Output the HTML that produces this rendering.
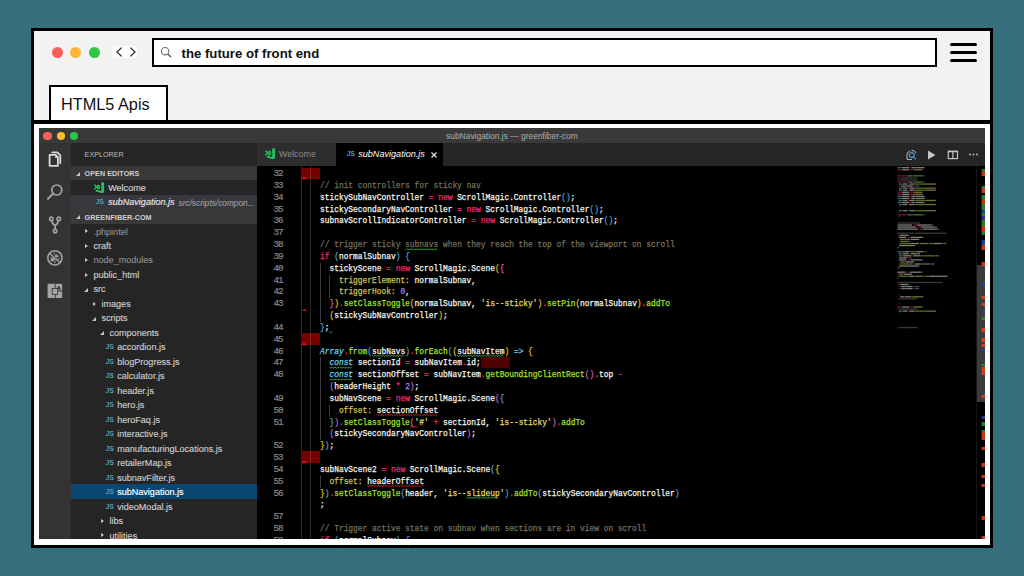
<!DOCTYPE html>
<html><head><meta charset="utf-8">
<style>
*{box-sizing:border-box;margin:0;padding:0}
html,body{width:1024px;height:576px;overflow:hidden;background:#376e7b;font-family:"Liberation Sans",sans-serif}
.a{position:absolute}
#frame{position:absolute;left:30.6px;top:28px;width:962.5px;height:520px;border:3px solid #000;background:#f2f2f2}
.dot{position:absolute;border-radius:50%}
#search{position:absolute;left:151.6px;top:37.9px;width:785.4px;height:28.8px;border:2.4px solid #000;background:#fff}
#stext{position:absolute;left:181.5px;top:45.8px;font-weight:bold;font-size:13.2px;color:#111;white-space:nowrap}
.hb{position:absolute;left:950px;width:27px;height:3px;background:#000;border-radius:1.5px}
#tab{position:absolute;left:49px;top:84.6px;width:119px;height:37px;border:2px solid #000;border-bottom:none;background:#fff}
#tabt{position:absolute;left:61px;top:94.8px;font-size:16.3px;color:#111;white-space:nowrap}
#hline{position:absolute;left:34px;top:119.9px;width:956px;height:3.7px;background:#000}
#white{position:absolute;left:34px;top:123px;width:956px;height:421px;background:#fff}
#vs{position:absolute;left:39px;top:128px;width:946px;height:411px;background:#000;overflow:hidden}
#title{position:absolute;left:39px;top:128px;width:946px;height:14.7px;background:#393939}
#ttext{position:absolute;left:446px;top:130.5px;font-size:8.45px;color:#adadad;white-space:nowrap}
#act{position:absolute;left:39px;top:142.7px;width:32px;height:396.3px;background:#333333}
#side{position:absolute;left:71px;top:142.7px;width:186px;height:396.3px;background:#252526}
.sh{position:absolute;left:71px;width:186px;height:14.5px;background:#383838}
.sht{position:absolute;left:84.6px;font-size:7.2px;font-weight:bold;color:#cfcfcf;white-space:nowrap;letter-spacing:0.05px}
.si{position:absolute;font-size:9.05px;line-height:14.48px;white-space:nowrap;-webkit-text-stroke:0.15px currentColor}
.selrow{position:absolute;left:71px;width:186px;height:14.9px;background:#094771}
.arc{position:absolute;width:0;height:0;border-left:3.3px solid #c5c5c5;border-top:2.6px solid transparent;border-bottom:2.6px solid transparent}
.aro{position:absolute;width:0;height:0;border-right:4px solid #c5c5c5;border-top:4px solid transparent}
.jsi{position:absolute;font-size:7px;line-height:14.48px;color:#519aba;font-weight:bold;letter-spacing:-0.1px}
#tabbar{position:absolute;left:257px;top:142.7px;width:728px;height:23.3px;background:#252526}
#tabw{position:absolute;left:257px;top:142.7px;width:79px;height:23.3px;background:#2d2d2d}
#taba{position:absolute;left:336px;top:142.7px;width:107px;height:23.3px;background:#000}
.ln{position:absolute;left:259.3px;-webkit-text-stroke:0.2px #8a8a8a;width:23.5px;text-align:right;font-family:"Liberation Mono",monospace;font-size:9.3px;letter-spacing:-0.9px;line-height:11.83px;color:#8a8a8a}
.cl{position:absolute;left:320px;font-family:"Liberation Mono",monospace;font-size:9.5px;line-height:11.83px;white-space:pre;color:#f8f8f2;font-weight:normal;-webkit-text-stroke:0.25px;transform:scaleX(0.8294);transform-origin:0 0}
.cm{color:#75715e;font-weight:normal}.id{color:#f8f8f2}.kw{color:#f92672}.fn{color:#a6e22e}.st{color:#e6db74}.nu{color:#ae81ff}
.sto{color:#66d9ef}.key{color:#d6c45a}.b0{color:#4ea1d9}.b1{color:#e8c100}.b2{color:#c965cc}.ar{color:#66d9ef}
.it{font-style:italic}
.gl{position:absolute;width:1px;background:#2e2e2e}
.redb{position:absolute;left:301px;width:19px;height:11.7px;background:#770000}
</style></head><body>
<div id="frame"></div>
<div class="dot" style="left:51.7px;top:46.6px;width:11.3px;height:11.3px;background:#fc605c"></div>
<div class="dot" style="left:70.2px;top:46.6px;width:11.3px;height:11.3px;background:#fdb73b"></div>
<div class="dot" style="left:88.8px;top:46.6px;width:11.3px;height:11.3px;background:#2fc744"></div>
<div class="a" style="left:112.5px;top:45.8px;width:24.5px;height:12.2px;background:#fcfcfc"></div>
<svg class="a" style="left:110px;top:42px" width="30" height="20" viewBox="110 42 30 20">
<path d="M121.6 47.6 L117 52 L121.6 56.4 M130.4 47.6 L135 52 L130.4 56.4" fill="none" stroke="#2a2a2a" stroke-width="1.25"/>
</svg>
<div id="search"></div>
<svg class="a" style="left:158px;top:46px" width="16" height="14" viewBox="158 46 16 14">
<circle cx="165.1" cy="51.2" r="3.7" fill="none" stroke="#6f6f6f" stroke-width="1.1"/>
<path d="M167.8 53.9 L171 57.1" stroke="#555" stroke-width="1.4"/>
</svg>
<div id="stext">the future of front end</div>
<div class="hb" style="top:43px"></div>
<div class="hb" style="top:50.8px"></div>
<div class="hb" style="top:58.7px"></div>
<div id="white"></div>
<div id="tab"></div>
<div id="tabt">HTML5 Apis</div>
<div id="hline"></div>
<div id="vs"></div>
<div id="title"></div>
<div class="dot" style="left:43.45px;top:131.65px;width:8.3px;height:8.3px;background:#fc5f57"></div>
<div class="dot" style="left:56.6px;top:131.65px;width:8.3px;height:8.3px;background:#fdbd2e"></div>
<div class="dot" style="left:69.75px;top:131.65px;width:8.3px;height:8.3px;background:#29c83f"></div>
<div id="ttext">subNavigation.js — greenfiber-com</div>
<div id="act"></div>
<svg class="a" style="left:39px;top:143px" width="32" height="160" viewBox="39 143 32 160">
<g fill="none" stroke="#d9d9d9" stroke-width="1.8" stroke-linejoin="round" stroke-linecap="round">
<path d="M49.6 154.9 L55.6 154.9 L57.9 157.2 L57.9 165.8 L49.6 165.8 Z"/>
<path d="M52.2 152.4 L57.3 152.4 L60.3 155.4 L60.3 163.2"/>
</g>
<path d="M55.2 155.2 L58 158 L55.2 158 Z" fill="#d9d9d9"/>
<g fill="none" stroke="#a0a0a0" stroke-width="1.7" stroke-linecap="round">
<circle cx="56.8" cy="190" r="5"/>
<path d="M53.2 193.6 L48 198.8" stroke-width="2.1"/>
<circle cx="51.3" cy="218.9" r="1.75" stroke-width="1.6"/><circle cx="58.75" cy="218.9" r="1.75" stroke-width="1.6"/><circle cx="55.1" cy="231.1" r="1.75" stroke-width="1.6"/>
<path d="M51.6 220.8 Q52.2 223.6 55.1 225.8 L55.1 229.2 M58.4 220.8 Q57.9 223.6 55.1 225.8" stroke-width="1.9"/>
<circle cx="54.9" cy="257.9" r="7.1" stroke-width="1.6"/>
<path d="M49.6 253.3 L59.8 262.4" stroke-width="1.4"/>
<path d="M50.8 258.5 L52.2 256.8 M54.2 252.7 L54.5 254.3 M58.5 256.2 L56.8 257.1 M59.7 258.6 L57.5 259.3 M55 263 L55.2 261.1 M50.4 261 L52 260.3" stroke-width="0.9"/>
</g>
<ellipse cx="52.8" cy="259.6" rx="1.9" ry="1.9" fill="#a0a0a0"/>
<ellipse cx="56.4" cy="255.9" rx="1.5" ry="1.4" fill="#a0a0a0"/>
<g fill="#a3a3a3">
<rect x="47.6" y="283.8" width="14.6" height="14.2"/>
</g>
<g fill="#333333">
<rect x="51.8" y="288" width="6.2" height="6.8"/>
<rect x="54.7" y="283.8" width="0.9" height="4.4"/>
<rect x="55.1" y="294.6" width="0.8" height="3.4"/>
<rect x="58" y="290.4" width="4.2" height="1.1"/>
<path d="M57.6 289.4 L57.6 286.6 Q58.4 286 59.4 286.6 L60.4 288.2 L59.9 289.4 Z"/>
</g>
<rect x="52.6" y="288.8" width="4.7" height="5.2" fill="#a3a3a3"/>
</svg>
<div id="side"></div>
<div class="sht" style="top:151.4px;font-weight:normal;font-size:7.1px;color:#bbbbbb">EXPLORER</div>
<div class="sh" style="top:165.7px"></div>
<div class="aro" style="left:76px;top:171.5px"></div>
<div class="sht" style="top:169px">OPEN EDITORS</div>
<div class="a" style="left:71px;top:194.8px;width:186px;height:14.5px;background:#37373d"></div>
<svg class="a" style="left:93.0px;top:180.8px" width="12" height="12" viewBox="264 147 12 12">
<rect x="272.2" y="148.2" width="2.9" height="10.6" rx="1" fill="#22c35f"/>
<path d="M267.4 156.7 L272.6 158.2" stroke="#22c35f" stroke-width="1.9" stroke-linecap="round"/>
<path d="M265.6 150.9 L268.5 153.6 M265.6 154.8 L268.5 152.2" stroke="#22c35f" stroke-width="1.3" stroke-linecap="round"/>
<ellipse cx="269.4" cy="152.9" rx="1.6" ry="2.5" fill="#22c35f"/>
<circle cx="269.3" cy="152.9" r="0.6" fill="#1b4a2a"/>
</svg>
<div class="si" style="left:108.2px;top:180.8px;color:#d4d4d4">Welcome</div>
<div class="jsi" style="left:95.5px;top:194.8px">JS</div>
<div class="si" style="left:108.2px;top:195.4px;color:#e6e6e6;font-style:italic">subNavigation.js</div>
<div class="si" style="left:178.5px;top:195.8px;color:#9a9a9a;font-style:italic;font-size:8.3px">src/scripts/compon...</div>
<div class="sh" style="top:209.3px"></div>
<div class="aro" style="left:76px;top:215px"></div>
<div class="sht" style="top:212.6px">GREENFIBER-COM</div>
<div class="arc" style="left:84.5px;top:229.20px"></div>
<div class="si" style="left:93.5px;top:224.50px;color:#8d8d8d">.phpintel</div>
<div class="arc" style="left:84.5px;top:243.68px"></div>
<div class="si" style="left:93.5px;top:238.98px;color:#cccccc">craft</div>
<div class="arc" style="left:84.5px;top:258.16px"></div>
<div class="si" style="left:93.5px;top:253.46px;color:#8d8d8d">node_modules</div>
<div class="arc" style="left:84.5px;top:272.64px"></div>
<div class="si" style="left:93.5px;top:267.94px;color:#cccccc">public_html</div>
<div class="aro" style="left:84.0px;top:287.92px"></div>
<div class="si" style="left:93.5px;top:282.42px;color:#cccccc">src</div>
<div class="arc" style="left:92.5px;top:301.60px"></div>
<div class="si" style="left:101.5px;top:296.90px;color:#cccccc">images</div>
<div class="aro" style="left:92.0px;top:316.88px"></div>
<div class="si" style="left:101.5px;top:311.38px;color:#cccccc">scripts</div>
<div class="aro" style="left:100.0px;top:331.36px"></div>
<div class="si" style="left:109.5px;top:325.86px;color:#cccccc">components</div>
<div class="jsi" style="left:105.4px;top:340.34px">JS</div>
<div class="si" style="left:117.2px;top:340.34px;color:#cccccc">accordion.js</div>
<div class="jsi" style="left:105.4px;top:354.82px">JS</div>
<div class="si" style="left:117.2px;top:354.82px;color:#cccccc">blogProgress.js</div>
<div class="jsi" style="left:105.4px;top:369.30px">JS</div>
<div class="si" style="left:117.2px;top:369.30px;color:#cccccc">calculator.js</div>
<div class="jsi" style="left:105.4px;top:383.78px">JS</div>
<div class="si" style="left:117.2px;top:383.78px;color:#cccccc">header.js</div>
<div class="jsi" style="left:105.4px;top:398.26px">JS</div>
<div class="si" style="left:117.2px;top:398.26px;color:#cccccc">hero.js</div>
<div class="jsi" style="left:105.4px;top:412.74px">JS</div>
<div class="si" style="left:117.2px;top:412.74px;color:#cccccc">heroFaq.js</div>
<div class="jsi" style="left:105.4px;top:427.22px">JS</div>
<div class="si" style="left:117.2px;top:427.22px;color:#cccccc">interactive.js</div>
<div class="jsi" style="left:105.4px;top:441.70px">JS</div>
<div class="si" style="left:117.2px;top:441.70px;color:#cccccc">manufacturingLocations.js</div>
<div class="jsi" style="left:105.4px;top:456.18px">JS</div>
<div class="si" style="left:117.2px;top:456.18px;color:#cccccc">retailerMap.js</div>
<div class="jsi" style="left:105.4px;top:470.66px">JS</div>
<div class="si" style="left:117.2px;top:470.66px;color:#cccccc">subnavFilter.js</div>
<div class="selrow" style="top:483.84px"></div>
<div class="jsi" style="left:105.4px;top:485.14px">JS</div>
<div class="si" style="left:117.2px;top:485.14px;color:#ffffff">subNavigation.js</div>
<div class="jsi" style="left:105.4px;top:499.62px">JS</div>
<div class="si" style="left:117.2px;top:499.62px;color:#cccccc">videoModal.js</div>
<div class="arc" style="left:100.5px;top:518.80px"></div>
<div class="si" style="left:109.5px;top:514.10px;color:#cccccc">libs</div>
<div class="arc" style="left:100.5px;top:533.28px"></div>
<div class="si" style="left:109.5px;top:528.58px;color:#cccccc">utilities</div>
<div id="tabbar"></div>
<div id="tabw"></div>
<svg class="a" style="left:264px;top:147px" width="12" height="12" viewBox="264 147 12 12">
<rect x="272.2" y="148.2" width="2.9" height="10.6" rx="1" fill="#22c35f"/>
<path d="M267.4 156.7 L272.6 158.2" stroke="#22c35f" stroke-width="1.9" stroke-linecap="round"/>
<path d="M265.6 150.9 L268.5 153.6 M265.6 154.8 L268.5 152.2" stroke="#22c35f" stroke-width="1.3" stroke-linecap="round"/>
<ellipse cx="269.4" cy="152.9" rx="1.6" ry="2.5" fill="#22c35f"/>
<circle cx="269.3" cy="152.9" r="0.6" fill="#1b4a2a"/>
</svg>
<div class="a" style="left:279px;top:149.2px;font-size:8.9px;color:#8b8b8b;white-space:nowrap">Welcome</div>
<div id="taba"></div>
<div class="jsi" style="left:346.4px;top:147.3px;line-height:14px">JS</div>
<div class="a" style="left:358.2px;top:149px;font-size:9.1px;color:#ffffff;font-style:italic;white-space:nowrap">subNavigation.js</div>
<svg class="a" style="left:430px;top:151px" width="8" height="8" viewBox="0 0 8 8"><path d="M1.5 1.5 L6.5 6.5 M6.5 1.5 L1.5 6.5" stroke="#e0e0e0" stroke-width="1.3"/></svg>
<svg class="a" style="left:900px;top:145px" width="85" height="20" viewBox="900 145 85 20">
<path d="M910 150.7 L907 153.2 L907 159.4 L912 159.4 M911.5 150.7 L914 150.7 L915.6 152.3 L915.6 153.2" fill="none" stroke="#b8b8b8" stroke-width="1"/>
<g fill="none" stroke="#4f8fcb" stroke-width="1.3"><circle cx="911.7" cy="155.1" r="2.4"/><path d="M913.5 157 L916 159.4"/></g>
<path d="M928 150.5 L935.5 155 L928 159.5 Z" fill="#c5c5c5"/>
<g fill="none" stroke="#c5c5c5" stroke-width="1.2"><rect x="948.3" y="151.2" width="9.2" height="7.4"/><path d="M952.9 151 v7.6 M948 151.6 h9.8" /></g>
<g fill="#c5c5c5"><circle cx="970" cy="154.5" r="0.9"/><circle cx="973.5" cy="154.5" r="0.9"/><circle cx="977" cy="154.5" r="0.9"/></g>
</svg>
<div class="a" style="left:301px;top:166px;width:1px;height:373px;background:#2c2c2c"></div>
<div class="a" style="left:310px;top:166px;width:1px;height:373px;background:#2c2c2c"></div>
<div class="a" style="left:301.3px;top:167.50px;width:18.5px;height:11.7px;background:#760000"></div>
<div class="a" style="left:310px;top:167.50px;width:1px;height:11.7px;background:#8a2020"></div>
<svg class="a" style="left:301px;top:176.10px" width="7" height="4"><path d="M0 3.2 L3 0.3 L6 3.2 Z" fill="#e01010"/></svg>
<div class="a" style="left:301.3px;top:333.12px;width:18.5px;height:11.7px;background:#760000"></div>
<div class="a" style="left:310px;top:333.12px;width:1px;height:11.7px;background:#8a2020"></div>
<svg class="a" style="left:301px;top:341.72px" width="7" height="4"><path d="M0 3.2 L3 0.3 L6 3.2 Z" fill="#e01010"/></svg>
<div class="a" style="left:301.3px;top:451.42px;width:18.5px;height:11.7px;background:#760000"></div>
<div class="a" style="left:310px;top:451.42px;width:1px;height:11.7px;background:#8a2020"></div>
<svg class="a" style="left:301px;top:460.02px" width="7" height="4"><path d="M0 3.2 L3 0.3 L6 3.2 Z" fill="#e01010"/></svg>
<svg class="a" style="left:301.5px;top:308.06px" width="6" height="4"><path d="M0 3 L2.5 0.5 L5 3 Z" fill="#c01010"/></svg>
<div class="a" style="left:481px;top:356.98px;width:29px;height:11.4px;background:#4e0000"></div>
<div class="a" style="left:320.0px;top:262.74px;width:1px;height:59.15px;background:#3a3a3a"></div>
<div class="a" style="left:329.4px;top:274.57px;width:1px;height:23.66px;background:#3a3a3a"></div>
<div class="a" style="left:320.0px;top:357.38px;width:1px;height:82.81px;background:#3a3a3a"></div>
<div class="a" style="left:329.4px;top:404.70px;width:1px;height:11.83px;background:#3a3a3a"></div>
<div class="a" style="left:320.0px;top:475.68px;width:1px;height:11.83px;background:#3a3a3a"></div>
<svg class="a" style="left:0;top:0" width="1024" height="576"><polyline points="405.03,248.68 406.43,250.08 407.83,248.68 409.23,250.08 410.63,248.68 412.03,250.08 413.43,248.68 414.83,250.08 416.23,248.68 417.63,250.08 419.03,248.68 420.43,250.08 421.83,248.68 423.23,250.08 424.63,248.68 426.03,250.08 427.43,248.68 428.83,250.08 430.23,248.68 431.63,250.08 433.03,248.68 434.43,250.08 435.83,248.68 437.23,250.08" fill="none" stroke="#3aa845" stroke-width="0.95"/><polyline points="371.96,355.15 373.36,356.55 374.76,355.15 376.16,356.55 377.56,355.15 378.96,356.55 380.36,355.15 381.76,356.55 383.16,355.15 384.56,356.55 385.96,355.15 387.36,356.55 388.76,355.15 390.16,356.55 391.56,355.15 392.96,356.55 394.36,355.15 395.76,356.55 397.16,355.15 398.56,356.55 399.96,355.15 401.36,356.55 402.76,355.15 404.16,356.55" fill="none" stroke="#3aa845" stroke-width="0.95"/><polyline points="457.00,355.15 458.40,356.55 459.80,355.15 461.20,356.55 462.60,355.15 464.00,356.55 465.40,355.15 466.80,356.55 468.20,355.15 469.60,356.55 471.00,355.15 472.40,356.55 473.80,355.15 475.20,356.55 476.60,355.15 478.00,356.55 479.40,355.15 480.80,356.55 482.20,355.15 483.60,356.55 485.00,355.15 486.40,356.55 487.80,355.15 489.20,356.55 490.60,355.15 492.00,356.55 493.40,355.15 494.80,356.55 496.20,355.15 497.60,356.55 499.00,355.15 500.40,356.55 501.80,355.15 503.20,356.55" fill="none" stroke="#3aa845" stroke-width="0.95"/><polyline points="329.45,366.98 330.85,368.38 332.25,366.98 333.65,368.38 335.05,366.98 336.45,368.38 337.85,366.98 339.25,368.38 340.65,366.98 342.05,368.38 343.45,366.98 344.85,368.38 346.25,366.98 347.65,368.38 349.05,366.98 350.45,368.38 351.85,366.98" fill="none" stroke="#3aa845" stroke-width="0.95"/><polyline points="329.45,378.81 330.85,380.21 332.25,378.81 333.65,380.21 335.05,378.81 336.45,380.21 337.85,378.81 339.25,380.21 340.65,378.81 342.05,380.21 343.45,378.81 344.85,380.21 346.25,378.81 347.65,380.21 349.05,378.81 350.45,380.21 351.85,378.81" fill="none" stroke="#3aa845" stroke-width="0.95"/><polyline points="376.69,414.30 378.09,415.70 379.49,414.30 380.89,415.70 382.29,414.30 383.69,415.70 385.09,414.30 386.49,415.70 387.89,414.30 389.29,415.70 390.69,414.30 392.09,415.70 393.49,414.30 394.89,415.70 396.29,414.30 397.69,415.70 399.09,414.30 400.49,415.70 401.89,414.30 403.29,415.70 404.69,414.30 406.09,415.70 407.49,414.30 408.89,415.70 410.29,414.30 411.69,415.70 413.09,414.30 414.49,415.70 415.89,414.30 417.29,415.70 418.69,414.30 420.09,415.70 421.49,414.30 422.89,415.70 424.29,414.30 425.69,415.70 427.09,414.30 428.49,415.70 429.89,414.30 431.29,415.70 432.69,414.30 434.09,415.70 435.49,414.30 436.89,415.70" fill="none" stroke="#e02020" stroke-width="0.95"/><polyline points="409.76,426.13 411.16,427.53 412.56,426.13 413.96,427.53 415.36,426.13 416.76,427.53 418.16,426.13" fill="none" stroke="#e02020" stroke-width="0.95"/><polyline points="367.24,485.28 368.64,486.68 370.04,485.28 371.44,486.68 372.84,485.28 374.24,486.68 375.64,485.28 377.04,486.68 378.44,485.28 379.84,486.68 381.24,485.28 382.64,486.68 384.04,485.28 385.44,486.68 386.84,485.28 388.24,486.68 389.64,485.28 391.04,486.68 392.44,485.28 393.84,486.68 395.24,485.28 396.64,486.68 398.04,485.28 399.44,486.68 400.84,485.28 402.24,486.68 403.64,485.28 405.04,486.68 406.44,485.28 407.84,486.68 409.24,485.28 410.64,486.68 412.04,485.28 413.44,486.68 414.84,485.28 416.24,486.68 417.64,485.28 419.04,486.68 420.44,485.28 421.84,486.68 423.24,485.28" fill="none" stroke="#e02020" stroke-width="0.95"/><polyline points="466.44,497.11 467.84,498.51 469.24,497.11 470.64,498.51 472.04,497.11 473.44,498.51 474.84,497.11 476.24,498.51 477.64,497.11 479.04,498.51 480.44,497.11 481.84,498.51 483.24,497.11 484.64,498.51 486.04,497.11 487.44,498.51 488.84,497.11 490.24,498.51 491.64,497.11 493.04,498.51 494.44,497.11 495.84,498.51 497.24,497.11 498.64,498.51" fill="none" stroke="#3aa845" stroke-width="0.95"/><polyline points="329.45,331.49 330.85,332.89 332.25,331.49" fill="none" stroke="#3aa845" stroke-width="0.95"/></svg>
<div class="ln" style="top:168.10px">32</div>
<div class="ln" style="top:179.93px">33</div>
<div class="cl" style="top:179.93px"><span class="cm">// init controllers for sticky nav</span></div>
<div class="ln" style="top:191.76px">34</div>
<div class="cl" style="top:191.76px"><span class="id">stickySubNavController </span><span class="kw">=</span><span class="id"> </span><span class="kw">new</span><span class="id"> ScrollMagic.Controller</span><span class="b0">()</span><span class="id">;</span></div>
<div class="ln" style="top:203.59px">35</div>
<div class="cl" style="top:203.59px"><span class="id">stickySecondaryNavController </span><span class="kw">=</span><span class="id"> </span><span class="kw">new</span><span class="id"> ScrollMagic.Controller</span><span class="b0">()</span><span class="id">;</span></div>
<div class="ln" style="top:215.42px">36</div>
<div class="cl" style="top:215.42px"><span class="id">subnavScrollIndicatorController </span><span class="kw">=</span><span class="id"> </span><span class="kw">new</span><span class="id"> ScrollMagic.Controller</span><span class="b0">()</span><span class="id">;</span></div>
<div class="ln" style="top:227.25px">37</div>
<div class="ln" style="top:239.08px">38</div>
<div class="cl" style="top:239.08px"><span class="cm">// trigger sticky </span><span class="cm sqg">subnavs</span><span class="cm"> when they reach the top of the viewport on scroll</span></div>
<div class="ln" style="top:250.91px">39</div>
<div class="cl" style="top:250.91px"><span class="kw">if</span><span class="id"> </span><span class="b0">(</span><span class="id">normalSubnav</span><span class="b0">)</span><span class="id"> </span><span class="b0">{</span></div>
<div class="ln" style="top:262.74px">40</div>
<div class="cl" style="top:262.74px"><span class="id">  stickyScene </span><span class="kw">=</span><span class="id"> </span><span class="kw">new</span><span class="id"> ScrollMagic.Scene</span><span class="b1">(</span><span class="b2">{</span></div>
<div class="ln" style="top:274.57px">41</div>
<div class="cl" style="top:274.57px"><span class="id">    </span><span class="key">triggerElement:</span><span class="id"> normalSubnav,</span></div>
<div class="ln" style="top:286.40px">42</div>
<div class="cl" style="top:286.40px"><span class="id">    </span><span class="key">triggerHook:</span><span class="id"> </span><span class="nu">0</span><span class="id">,</span></div>
<div class="ln" style="top:298.23px">43</div>
<div class="cl" style="top:298.23px"><span class="id">  </span><span class="b2">}</span><span class="b1">)</span><span class="kw">.</span><span class="fn">setClassToggle</span><span class="b1">(</span><span class="id">normalSubnav, </span><span class="st">&#x27;is--sticky&#x27;</span><span class="b1">)</span><span class="kw">.</span><span class="fn">setPin</span><span class="b1">(</span><span class="id">normalSubnav</span><span class="b1">)</span><span class="kw">.</span><span class="fn">addTo</span></div>
<div class="cl" style="top:310.06px"><span class="id">  </span><span class="b1">(</span><span class="id">stickySubNavController</span><span class="b1">)</span><span class="id">;</span></div>
<div class="ln" style="top:321.89px">44</div>
<div class="cl" style="top:321.89px"><span class="b0">}</span><span class="id">;</span></div>
<div class="ln" style="top:333.72px">45</div>
<div class="ln" style="top:345.55px">46</div>
<div class="cl" style="top:345.55px"><span class="sto it">Array</span><span class="kw">.</span><span class="fn">from</span><span class="b0">(</span><span class="id sqg">subNavs</span><span class="b0">)</span><span class="kw">.</span><span class="fn">forEach</span><span class="b0">(</span><span class="b1">(</span><span class="id sqg">subNavItem</span><span class="b1">)</span><span class="id"> </span><span class="ar">=&gt;</span><span class="id"> </span><span class="b1">{</span></div>
<div class="ln" style="top:357.38px">47</div>
<div class="cl" style="top:357.38px"><span class="id">  </span><span class="sto it sqg">const</span><span class="id"> sectionId </span><span class="kw">=</span><span class="id"> subNavItem</span><span class="kw">.</span><span class="id">id;</span></div>
<div class="ln" style="top:369.21px">48</div>
<div class="cl" style="top:369.21px"><span class="id">  </span><span class="sto it sqg">const</span><span class="id"> sectionOffset </span><span class="kw">=</span><span class="id"> subNavItem</span><span class="kw">.</span><span class="fn">getBoundingClientRect</span><span class="b2">()</span><span class="kw">.</span><span class="id">top </span><span class="kw">-</span></div>
<div class="cl" style="top:381.04px"><span class="id">  </span><span class="b2">(</span><span class="id">headerHeight </span><span class="kw">*</span><span class="id"> </span><span class="nu">2</span><span class="b2">)</span><span class="id">;</span></div>
<div class="ln" style="top:392.87px">49</div>
<div class="cl" style="top:392.87px"><span class="id">  subNavScene </span><span class="kw">=</span><span class="id"> </span><span class="kw">new</span><span class="id"> ScrollMagic.Scene</span><span class="b2">(</span><span class="b0">{</span></div>
<div class="ln" style="top:404.70px">50</div>
<div class="cl" style="top:404.70px"><span class="id">    </span><span class="key">offset:</span><span class="id"> </span><span class="id sqr">sectionOffset</span></div>
<div class="ln" style="top:416.53px">51</div>
<div class="cl" style="top:416.53px"><span class="id">  </span><span class="b0">}</span><span class="b2">)</span><span class="kw">.</span><span class="fn">setClassToggle</span><span class="b2">(</span><span class="st">&#x27;#&#x27;</span><span class="id"> </span><span class="kw">+</span><span class="id"> sectionId, </span><span class="st">&#x27;is--sticky&#x27;</span><span class="b2">)</span><span class="kw">.</span><span class="fn">addTo</span></div>
<div class="cl" style="top:428.36px"><span class="id">  </span><span class="b2">(</span><span class="id">stickySecondaryNavController</span><span class="b2">)</span><span class="id">;</span></div>
<div class="ln" style="top:440.19px">52</div>
<div class="cl" style="top:440.19px"><span class="b1">}</span><span class="b0">)</span><span class="id">;</span></div>
<div class="ln" style="top:452.02px">53</div>
<div class="ln" style="top:463.85px">54</div>
<div class="cl" style="top:463.85px"><span class="id">subNavScene2 </span><span class="kw">=</span><span class="id"> </span><span class="kw">new</span><span class="id"> ScrollMagic.Scene</span><span class="b0">(</span><span class="b1">{</span></div>
<div class="ln" style="top:475.68px">55</div>
<div class="cl" style="top:475.68px"><span class="id">  </span><span class="key">offset:</span><span class="id"> </span><span class="id sqr">headerOffset</span></div>
<div class="ln" style="top:487.51px">56</div>
<div class="cl" style="top:487.51px"><span class="b1">}</span><span class="b0">)</span><span class="kw">.</span><span class="fn">setClassToggle</span><span class="b0">(</span><span class="id">header, </span><span class="st">&#x27;is--</span><span class="st sqg">slideup</span><span class="st">&#x27;</span><span class="b0">)</span><span class="kw">.</span><span class="fn">addTo</span><span class="b0">(</span><span class="id">stickySecondaryNavController</span><span class="b0">)</span></div>
<div class="cl" style="top:499.34px"><span class="id">;</span></div>
<div class="ln" style="top:511.17px">57</div>
<div class="ln" style="top:523.00px">58</div>
<div class="cl" style="top:523.00px"><span class="cm">// Trigger active state on subnav when sections are in view on scroll</span></div>
<div class="ln" style="top:534.83px">59</div>
<div class="cl" style="top:534.83px"><span class="kw">if</span><span class="id"> </span><span class="b0">(</span><span class="id">normalSubnav</span><span class="b0">)</span><span class="id"> </span><span class="b0">{</span></div>
<svg class="a" style="left:0;top:0" width="1024" height="576">
<rect x="897.50" y="167.00" width="3.30" height="1.3" fill="#66d9ef" opacity="0.5"/>
<rect x="901.46" y="167.00" width="7.92" height="1.3" fill="#f8f8f2" opacity="0.5"/>
<rect x="910.04" y="167.00" width="0.66" height="1.3" fill="#f92672" opacity="0.5"/>
<rect x="911.36" y="167.00" width="3.96" height="1.3" fill="#f8f8f2" opacity="0.5"/>
<rect x="915.32" y="167.00" width="0.66" height="1.3" fill="#f92672" opacity="0.5"/>
<rect x="915.98" y="167.00" width="7.92" height="1.3" fill="#f8f8f2" opacity="0.5"/>
<rect x="923.90" y="167.00" width="0.66" height="1.3" fill="#f8f8f2" opacity="0.5"/>
<rect x="897.50" y="169.05" width="3.96" height="1.3" fill="#f92672" opacity="0.5"/>
<rect x="902.12" y="169.05" width="7.26" height="1.3" fill="#f8f8f2" opacity="0.5"/>
<rect x="910.04" y="169.05" width="2.64" height="1.3" fill="#f92672" opacity="0.5"/>
<rect x="913.34" y="169.05" width="8.58" height="1.3" fill="#e6db74" opacity="0.5"/>
<rect x="921.92" y="169.05" width="0.66" height="1.3" fill="#f8f8f2" opacity="0.5"/>
<rect x="898.82" y="173.15" width="0.66" height="1.3" fill="#4ea1d9" opacity="0.5"/>
<rect x="897.50" y="175.20" width="3.96" height="1.3" fill="#f92672" opacity="0.5"/>
<rect x="902.12" y="175.20" width="4.62" height="1.3" fill="#f92672" opacity="0.5"/>
<rect x="907.40" y="175.20" width="5.28" height="1.3" fill="#66d9ef" opacity="0.5"/>
<rect x="913.34" y="175.20" width="8.58" height="1.3" fill="#a6e22e" opacity="0.5"/>
<rect x="921.92" y="175.20" width="2.64" height="1.3" fill="#4ea1d9" opacity="0.5"/>
<rect x="897.50" y="177.25" width="1.32" height="1.3" fill="#75715e" opacity="0.5"/>
<rect x="899.48" y="177.25" width="17.82" height="1.3" fill="#75715e" opacity="0.5"/>
<rect x="897.50" y="179.30" width="1.32" height="1.3" fill="#75715e" opacity="0.5"/>
<rect x="899.48" y="179.30" width="17.82" height="1.3" fill="#75715e" opacity="0.5"/>
<rect x="897.50" y="181.35" width="3.96" height="1.3" fill="#f92672" opacity="0.5"/>
<rect x="902.12" y="181.35" width="4.62" height="1.3" fill="#f92672" opacity="0.5"/>
<rect x="907.40" y="181.35" width="5.28" height="1.3" fill="#66d9ef" opacity="0.5"/>
<rect x="913.34" y="181.35" width="8.58" height="1.3" fill="#a6e22e" opacity="0.5"/>
<rect x="921.92" y="181.35" width="2.64" height="1.3" fill="#4ea1d9" opacity="0.5"/>
<rect x="898.82" y="183.40" width="3.30" height="1.3" fill="#66d9ef" opacity="0.5"/>
<rect x="902.78" y="183.40" width="4.62" height="1.3" fill="#f8f8f2" opacity="0.5"/>
<rect x="908.06" y="183.40" width="0.66" height="1.3" fill="#f92672" opacity="0.5"/>
<rect x="909.38" y="183.40" width="5.28" height="1.3" fill="#f8f8f2" opacity="0.5"/>
<rect x="914.66" y="183.40" width="0.66" height="1.3" fill="#f92672" opacity="0.5"/>
<rect x="915.32" y="183.40" width="10.56" height="1.3" fill="#a6e22e" opacity="0.5"/>
<rect x="925.88" y="183.40" width="9.24" height="1.3" fill="#e6db74" opacity="0.5"/>
<rect x="935.12" y="183.40" width="0.66" height="1.3" fill="#f8f8f2" opacity="0.5"/>
<rect x="898.82" y="185.45" width="1.32" height="1.3" fill="#f92672" opacity="0.5"/>
<rect x="900.80" y="185.45" width="0.66" height="1.3" fill="#4ea1d9" opacity="0.5"/>
<rect x="901.46" y="185.45" width="3.96" height="1.3" fill="#f8f8f2" opacity="0.5"/>
<rect x="905.42" y="185.45" width="0.66" height="1.3" fill="#f92672" opacity="0.5"/>
<rect x="906.08" y="185.45" width="6.60" height="1.3" fill="#f8f8f2" opacity="0.5"/>
<rect x="913.34" y="185.45" width="0.66" height="1.3" fill="#f92672" opacity="0.5"/>
<rect x="914.66" y="185.45" width="2.64" height="1.3" fill="#ae81ff" opacity="0.5"/>
<rect x="917.30" y="185.45" width="1.98" height="1.3" fill="#4ea1d9" opacity="0.5"/>
<rect x="898.82" y="187.50" width="3.30" height="1.3" fill="#66d9ef" opacity="0.5"/>
<rect x="902.78" y="187.50" width="4.62" height="1.3" fill="#f8f8f2" opacity="0.5"/>
<rect x="908.06" y="187.50" width="0.66" height="1.3" fill="#f92672" opacity="0.5"/>
<rect x="909.38" y="187.50" width="5.28" height="1.3" fill="#f8f8f2" opacity="0.5"/>
<rect x="914.66" y="187.50" width="0.66" height="1.3" fill="#f92672" opacity="0.5"/>
<rect x="915.32" y="187.50" width="10.56" height="1.3" fill="#a6e22e" opacity="0.5"/>
<rect x="925.88" y="187.50" width="9.24" height="1.3" fill="#e6db74" opacity="0.5"/>
<rect x="935.12" y="187.50" width="0.66" height="1.3" fill="#f8f8f2" opacity="0.5"/>
<rect x="898.82" y="189.55" width="3.30" height="1.3" fill="#66d9ef" opacity="0.5"/>
<rect x="902.78" y="189.55" width="4.62" height="1.3" fill="#f8f8f2" opacity="0.5"/>
<rect x="908.06" y="189.55" width="0.66" height="1.3" fill="#f92672" opacity="0.5"/>
<rect x="909.38" y="189.55" width="5.28" height="1.3" fill="#f8f8f2" opacity="0.5"/>
<rect x="914.66" y="189.55" width="0.66" height="1.3" fill="#f92672" opacity="0.5"/>
<rect x="915.32" y="189.55" width="10.56" height="1.3" fill="#a6e22e" opacity="0.5"/>
<rect x="925.88" y="189.55" width="9.24" height="1.3" fill="#e6db74" opacity="0.5"/>
<rect x="935.12" y="189.55" width="0.66" height="1.3" fill="#f8f8f2" opacity="0.5"/>
<rect x="897.50" y="191.60" width="3.96" height="1.3" fill="#f92672" opacity="0.5"/>
<rect x="902.12" y="191.60" width="7.26" height="1.3" fill="#f8f8f2" opacity="0.5"/>
<rect x="910.04" y="191.60" width="2.64" height="1.3" fill="#f92672" opacity="0.5"/>
<rect x="913.34" y="191.60" width="8.58" height="1.3" fill="#e6db74" opacity="0.5"/>
<rect x="921.92" y="191.60" width="0.66" height="1.3" fill="#f8f8f2" opacity="0.5"/>
<rect x="897.50" y="193.65" width="3.96" height="1.3" fill="#f92672" opacity="0.5"/>
<rect x="902.12" y="193.65" width="7.26" height="1.3" fill="#f8f8f2" opacity="0.5"/>
<rect x="910.04" y="193.65" width="2.64" height="1.3" fill="#f92672" opacity="0.5"/>
<rect x="913.34" y="193.65" width="8.58" height="1.3" fill="#e6db74" opacity="0.5"/>
<rect x="921.92" y="193.65" width="0.66" height="1.3" fill="#f8f8f2" opacity="0.5"/>
<rect x="897.50" y="195.70" width="3.30" height="1.3" fill="#66d9ef" opacity="0.5"/>
<rect x="901.46" y="195.70" width="7.92" height="1.3" fill="#f8f8f2" opacity="0.5"/>
<rect x="910.04" y="195.70" width="0.66" height="1.3" fill="#f92672" opacity="0.5"/>
<rect x="911.36" y="195.70" width="3.96" height="1.3" fill="#f8f8f2" opacity="0.5"/>
<rect x="915.32" y="195.70" width="0.66" height="1.3" fill="#f92672" opacity="0.5"/>
<rect x="915.98" y="195.70" width="7.92" height="1.3" fill="#f8f8f2" opacity="0.5"/>
<rect x="923.90" y="195.70" width="0.66" height="1.3" fill="#f8f8f2" opacity="0.5"/>
<rect x="897.50" y="197.75" width="3.30" height="1.3" fill="#66d9ef" opacity="0.5"/>
<rect x="901.46" y="197.75" width="7.92" height="1.3" fill="#f8f8f2" opacity="0.5"/>
<rect x="910.04" y="197.75" width="0.66" height="1.3" fill="#f92672" opacity="0.5"/>
<rect x="911.36" y="197.75" width="3.96" height="1.3" fill="#f8f8f2" opacity="0.5"/>
<rect x="915.32" y="197.75" width="0.66" height="1.3" fill="#f92672" opacity="0.5"/>
<rect x="915.98" y="197.75" width="7.92" height="1.3" fill="#f8f8f2" opacity="0.5"/>
<rect x="923.90" y="197.75" width="0.66" height="1.3" fill="#f8f8f2" opacity="0.5"/>
<rect x="898.82" y="199.80" width="3.30" height="1.3" fill="#66d9ef" opacity="0.5"/>
<rect x="902.78" y="199.80" width="4.62" height="1.3" fill="#f8f8f2" opacity="0.5"/>
<rect x="908.06" y="199.80" width="0.66" height="1.3" fill="#f92672" opacity="0.5"/>
<rect x="909.38" y="199.80" width="5.28" height="1.3" fill="#f8f8f2" opacity="0.5"/>
<rect x="914.66" y="199.80" width="0.66" height="1.3" fill="#f92672" opacity="0.5"/>
<rect x="915.32" y="199.80" width="10.56" height="1.3" fill="#a6e22e" opacity="0.5"/>
<rect x="925.88" y="199.80" width="9.24" height="1.3" fill="#e6db74" opacity="0.5"/>
<rect x="935.12" y="199.80" width="0.66" height="1.3" fill="#f8f8f2" opacity="0.5"/>
<rect x="897.50" y="201.85" width="3.30" height="1.3" fill="#66d9ef" opacity="0.5"/>
<rect x="901.46" y="201.85" width="7.92" height="1.3" fill="#f8f8f2" opacity="0.5"/>
<rect x="910.04" y="201.85" width="0.66" height="1.3" fill="#f92672" opacity="0.5"/>
<rect x="911.36" y="201.85" width="3.96" height="1.3" fill="#f8f8f2" opacity="0.5"/>
<rect x="915.32" y="201.85" width="0.66" height="1.3" fill="#f92672" opacity="0.5"/>
<rect x="915.98" y="201.85" width="7.92" height="1.3" fill="#f8f8f2" opacity="0.5"/>
<rect x="923.90" y="201.85" width="0.66" height="1.3" fill="#f8f8f2" opacity="0.5"/>
<rect x="898.82" y="203.90" width="3.30" height="1.3" fill="#66d9ef" opacity="0.5"/>
<rect x="902.78" y="203.90" width="4.62" height="1.3" fill="#f8f8f2" opacity="0.5"/>
<rect x="908.06" y="203.90" width="0.66" height="1.3" fill="#f92672" opacity="0.5"/>
<rect x="909.38" y="203.90" width="5.28" height="1.3" fill="#f8f8f2" opacity="0.5"/>
<rect x="914.66" y="203.90" width="0.66" height="1.3" fill="#f92672" opacity="0.5"/>
<rect x="915.32" y="203.90" width="10.56" height="1.3" fill="#a6e22e" opacity="0.5"/>
<rect x="925.88" y="203.90" width="9.24" height="1.3" fill="#e6db74" opacity="0.5"/>
<rect x="935.12" y="203.90" width="0.66" height="1.3" fill="#f8f8f2" opacity="0.5"/>
<rect x="898.82" y="205.95" width="0.66" height="1.3" fill="#4ea1d9" opacity="0.5"/>
<rect x="898.82" y="210.05" width="3.30" height="1.3" fill="#66d9ef" opacity="0.5"/>
<rect x="902.78" y="210.05" width="4.62" height="1.3" fill="#f8f8f2" opacity="0.5"/>
<rect x="908.06" y="210.05" width="0.66" height="1.3" fill="#f92672" opacity="0.5"/>
<rect x="909.38" y="210.05" width="5.28" height="1.3" fill="#f8f8f2" opacity="0.5"/>
<rect x="914.66" y="210.05" width="0.66" height="1.3" fill="#f92672" opacity="0.5"/>
<rect x="915.32" y="210.05" width="10.56" height="1.3" fill="#a6e22e" opacity="0.5"/>
<rect x="925.88" y="210.05" width="9.24" height="1.3" fill="#e6db74" opacity="0.5"/>
<rect x="935.12" y="210.05" width="0.66" height="1.3" fill="#f8f8f2" opacity="0.5"/>
<rect x="897.50" y="214.15" width="3.96" height="1.3" fill="#f92672" opacity="0.5"/>
<rect x="902.12" y="214.15" width="4.62" height="1.3" fill="#f92672" opacity="0.5"/>
<rect x="907.40" y="214.15" width="5.28" height="1.3" fill="#66d9ef" opacity="0.5"/>
<rect x="913.34" y="214.15" width="8.58" height="1.3" fill="#a6e22e" opacity="0.5"/>
<rect x="921.92" y="214.15" width="2.64" height="1.3" fill="#4ea1d9" opacity="0.5"/>
<rect x="898.82" y="216.20" width="0.66" height="1.3" fill="#4ea1d9" opacity="0.5"/>
<rect x="897.50" y="222.35" width="22.44" height="1.3" fill="#75715e" opacity="0.5"/>
<rect x="897.50" y="224.40" width="14.52" height="1.3" fill="#f8f8f2" opacity="0.5"/>
<rect x="912.68" y="224.40" width="0.66" height="1.3" fill="#f92672" opacity="0.5"/>
<rect x="914.00" y="224.40" width="1.98" height="1.3" fill="#f92672" opacity="0.5"/>
<rect x="916.64" y="224.40" width="14.52" height="1.3" fill="#f8f8f2" opacity="0.5"/>
<rect x="931.16" y="224.40" width="1.32" height="1.3" fill="#4ea1d9" opacity="0.5"/>
<rect x="932.48" y="224.40" width="0.66" height="1.3" fill="#f8f8f2" opacity="0.5"/>
<rect x="897.50" y="226.45" width="18.48" height="1.3" fill="#f8f8f2" opacity="0.5"/>
<rect x="916.64" y="226.45" width="0.66" height="1.3" fill="#f92672" opacity="0.5"/>
<rect x="917.96" y="226.45" width="1.98" height="1.3" fill="#f92672" opacity="0.5"/>
<rect x="920.60" y="226.45" width="14.52" height="1.3" fill="#f8f8f2" opacity="0.5"/>
<rect x="935.12" y="226.45" width="1.32" height="1.3" fill="#4ea1d9" opacity="0.5"/>
<rect x="936.44" y="226.45" width="0.66" height="1.3" fill="#f8f8f2" opacity="0.5"/>
<rect x="897.50" y="228.50" width="20.46" height="1.3" fill="#f8f8f2" opacity="0.5"/>
<rect x="918.62" y="228.50" width="0.66" height="1.3" fill="#f92672" opacity="0.5"/>
<rect x="919.94" y="228.50" width="1.98" height="1.3" fill="#f92672" opacity="0.5"/>
<rect x="922.58" y="228.50" width="14.52" height="1.3" fill="#f8f8f2" opacity="0.5"/>
<rect x="937.10" y="228.50" width="1.32" height="1.3" fill="#4ea1d9" opacity="0.5"/>
<rect x="938.42" y="228.50" width="0.66" height="1.3" fill="#f8f8f2" opacity="0.5"/>
<rect x="897.50" y="232.60" width="11.22" height="1.3" fill="#75715e" opacity="0.5"/>
<rect x="909.38" y="232.60" width="4.62" height="1.3" fill="#75715e" opacity="0.5"/>
<rect x="914.66" y="232.60" width="32.34" height="1.3" fill="#75715e" opacity="0.5"/>
<rect x="897.50" y="234.65" width="1.32" height="1.3" fill="#f92672" opacity="0.5"/>
<rect x="899.48" y="234.65" width="0.66" height="1.3" fill="#4ea1d9" opacity="0.5"/>
<rect x="900.14" y="234.65" width="7.92" height="1.3" fill="#f8f8f2" opacity="0.5"/>
<rect x="908.06" y="234.65" width="0.66" height="1.3" fill="#4ea1d9" opacity="0.5"/>
<rect x="909.38" y="234.65" width="0.66" height="1.3" fill="#4ea1d9" opacity="0.5"/>
<rect x="898.82" y="236.70" width="7.26" height="1.3" fill="#f8f8f2" opacity="0.5"/>
<rect x="906.74" y="236.70" width="0.66" height="1.3" fill="#f92672" opacity="0.5"/>
<rect x="908.06" y="236.70" width="1.98" height="1.3" fill="#f92672" opacity="0.5"/>
<rect x="910.70" y="236.70" width="11.22" height="1.3" fill="#f8f8f2" opacity="0.5"/>
<rect x="921.92" y="236.70" width="0.66" height="1.3" fill="#e8c100" opacity="0.5"/>
<rect x="922.58" y="236.70" width="0.66" height="1.3" fill="#c965cc" opacity="0.5"/>
<rect x="900.14" y="238.75" width="9.90" height="1.3" fill="#d6c45a" opacity="0.5"/>
<rect x="910.70" y="238.75" width="8.58" height="1.3" fill="#f8f8f2" opacity="0.5"/>
<rect x="900.14" y="240.80" width="7.92" height="1.3" fill="#d6c45a" opacity="0.5"/>
<rect x="908.72" y="240.80" width="0.66" height="1.3" fill="#ae81ff" opacity="0.5"/>
<rect x="909.38" y="240.80" width="0.66" height="1.3" fill="#f8f8f2" opacity="0.5"/>
<rect x="898.82" y="242.85" width="0.66" height="1.3" fill="#c965cc" opacity="0.5"/>
<rect x="899.48" y="242.85" width="0.66" height="1.3" fill="#e8c100" opacity="0.5"/>
<rect x="900.14" y="242.85" width="0.66" height="1.3" fill="#f92672" opacity="0.5"/>
<rect x="900.80" y="242.85" width="9.24" height="1.3" fill="#a6e22e" opacity="0.5"/>
<rect x="910.04" y="242.85" width="0.66" height="1.3" fill="#e8c100" opacity="0.5"/>
<rect x="910.70" y="242.85" width="8.58" height="1.3" fill="#f8f8f2" opacity="0.5"/>
<rect x="919.94" y="242.85" width="7.92" height="1.3" fill="#e6db74" opacity="0.5"/>
<rect x="927.86" y="242.85" width="0.66" height="1.3" fill="#e8c100" opacity="0.5"/>
<rect x="928.52" y="242.85" width="0.66" height="1.3" fill="#f92672" opacity="0.5"/>
<rect x="929.18" y="242.85" width="3.96" height="1.3" fill="#a6e22e" opacity="0.5"/>
<rect x="933.14" y="242.85" width="0.66" height="1.3" fill="#e8c100" opacity="0.5"/>
<rect x="933.80" y="242.85" width="7.92" height="1.3" fill="#f8f8f2" opacity="0.5"/>
<rect x="941.72" y="242.85" width="0.66" height="1.3" fill="#e8c100" opacity="0.5"/>
<rect x="942.38" y="242.85" width="0.66" height="1.3" fill="#f92672" opacity="0.5"/>
<rect x="943.04" y="242.85" width="3.30" height="1.3" fill="#a6e22e" opacity="0.5"/>
<rect x="898.82" y="244.90" width="0.66" height="1.3" fill="#e8c100" opacity="0.5"/>
<rect x="899.48" y="244.90" width="14.52" height="1.3" fill="#f8f8f2" opacity="0.5"/>
<rect x="914.00" y="244.90" width="0.66" height="1.3" fill="#e8c100" opacity="0.5"/>
<rect x="914.66" y="244.90" width="0.66" height="1.3" fill="#f8f8f2" opacity="0.5"/>
<rect x="897.50" y="246.95" width="0.66" height="1.3" fill="#4ea1d9" opacity="0.5"/>
<rect x="898.16" y="246.95" width="0.66" height="1.3" fill="#f8f8f2" opacity="0.5"/>
<rect x="897.50" y="251.05" width="3.30" height="1.3" fill="#66d9ef" opacity="0.5"/>
<rect x="900.80" y="251.05" width="0.66" height="1.3" fill="#f92672" opacity="0.5"/>
<rect x="901.46" y="251.05" width="2.64" height="1.3" fill="#a6e22e" opacity="0.5"/>
<rect x="904.10" y="251.05" width="0.66" height="1.3" fill="#4ea1d9" opacity="0.5"/>
<rect x="904.76" y="251.05" width="4.62" height="1.3" fill="#f8f8f2" opacity="0.5"/>
<rect x="909.38" y="251.05" width="0.66" height="1.3" fill="#4ea1d9" opacity="0.5"/>
<rect x="910.04" y="251.05" width="0.66" height="1.3" fill="#f92672" opacity="0.5"/>
<rect x="910.70" y="251.05" width="4.62" height="1.3" fill="#a6e22e" opacity="0.5"/>
<rect x="915.32" y="251.05" width="0.66" height="1.3" fill="#4ea1d9" opacity="0.5"/>
<rect x="915.98" y="251.05" width="0.66" height="1.3" fill="#e8c100" opacity="0.5"/>
<rect x="916.64" y="251.05" width="6.60" height="1.3" fill="#f8f8f2" opacity="0.5"/>
<rect x="923.24" y="251.05" width="0.66" height="1.3" fill="#e8c100" opacity="0.5"/>
<rect x="924.56" y="251.05" width="1.32" height="1.3" fill="#66d9ef" opacity="0.5"/>
<rect x="926.54" y="251.05" width="0.66" height="1.3" fill="#e8c100" opacity="0.5"/>
<rect x="898.82" y="253.10" width="3.30" height="1.3" fill="#66d9ef" opacity="0.5"/>
<rect x="902.78" y="253.10" width="5.94" height="1.3" fill="#f8f8f2" opacity="0.5"/>
<rect x="909.38" y="253.10" width="0.66" height="1.3" fill="#f92672" opacity="0.5"/>
<rect x="910.70" y="253.10" width="6.60" height="1.3" fill="#f8f8f2" opacity="0.5"/>
<rect x="917.30" y="253.10" width="0.66" height="1.3" fill="#f92672" opacity="0.5"/>
<rect x="917.96" y="253.10" width="1.98" height="1.3" fill="#f8f8f2" opacity="0.5"/>
<rect x="898.82" y="255.15" width="3.30" height="1.3" fill="#66d9ef" opacity="0.5"/>
<rect x="902.78" y="255.15" width="8.58" height="1.3" fill="#f8f8f2" opacity="0.5"/>
<rect x="912.02" y="255.15" width="0.66" height="1.3" fill="#f92672" opacity="0.5"/>
<rect x="913.34" y="255.15" width="6.60" height="1.3" fill="#f8f8f2" opacity="0.5"/>
<rect x="919.94" y="255.15" width="0.66" height="1.3" fill="#f92672" opacity="0.5"/>
<rect x="920.60" y="255.15" width="13.86" height="1.3" fill="#a6e22e" opacity="0.5"/>
<rect x="934.46" y="255.15" width="1.32" height="1.3" fill="#c965cc" opacity="0.5"/>
<rect x="935.78" y="255.15" width="0.66" height="1.3" fill="#f92672" opacity="0.5"/>
<rect x="936.44" y="255.15" width="1.98" height="1.3" fill="#f8f8f2" opacity="0.5"/>
<rect x="939.08" y="255.15" width="0.66" height="1.3" fill="#f92672" opacity="0.5"/>
<rect x="898.82" y="257.20" width="0.66" height="1.3" fill="#c965cc" opacity="0.5"/>
<rect x="899.48" y="257.20" width="7.92" height="1.3" fill="#f8f8f2" opacity="0.5"/>
<rect x="908.06" y="257.20" width="0.66" height="1.3" fill="#f92672" opacity="0.5"/>
<rect x="909.38" y="257.20" width="0.66" height="1.3" fill="#ae81ff" opacity="0.5"/>
<rect x="910.04" y="257.20" width="0.66" height="1.3" fill="#c965cc" opacity="0.5"/>
<rect x="910.70" y="257.20" width="0.66" height="1.3" fill="#f8f8f2" opacity="0.5"/>
<rect x="898.82" y="259.25" width="7.26" height="1.3" fill="#f8f8f2" opacity="0.5"/>
<rect x="906.74" y="259.25" width="0.66" height="1.3" fill="#f92672" opacity="0.5"/>
<rect x="908.06" y="259.25" width="1.98" height="1.3" fill="#f92672" opacity="0.5"/>
<rect x="910.70" y="259.25" width="11.22" height="1.3" fill="#f8f8f2" opacity="0.5"/>
<rect x="921.92" y="259.25" width="0.66" height="1.3" fill="#c965cc" opacity="0.5"/>
<rect x="922.58" y="259.25" width="0.66" height="1.3" fill="#4ea1d9" opacity="0.5"/>
<rect x="900.14" y="261.30" width="4.62" height="1.3" fill="#d6c45a" opacity="0.5"/>
<rect x="905.42" y="261.30" width="8.58" height="1.3" fill="#f8f8f2" opacity="0.5"/>
<rect x="898.82" y="263.35" width="0.66" height="1.3" fill="#4ea1d9" opacity="0.5"/>
<rect x="899.48" y="263.35" width="0.66" height="1.3" fill="#c965cc" opacity="0.5"/>
<rect x="900.14" y="263.35" width="0.66" height="1.3" fill="#f92672" opacity="0.5"/>
<rect x="900.80" y="263.35" width="9.24" height="1.3" fill="#a6e22e" opacity="0.5"/>
<rect x="910.04" y="263.35" width="0.66" height="1.3" fill="#c965cc" opacity="0.5"/>
<rect x="910.70" y="263.35" width="1.98" height="1.3" fill="#e6db74" opacity="0.5"/>
<rect x="913.34" y="263.35" width="0.66" height="1.3" fill="#f92672" opacity="0.5"/>
<rect x="914.66" y="263.35" width="6.60" height="1.3" fill="#f8f8f2" opacity="0.5"/>
<rect x="921.92" y="263.35" width="7.92" height="1.3" fill="#e6db74" opacity="0.5"/>
<rect x="929.84" y="263.35" width="0.66" height="1.3" fill="#c965cc" opacity="0.5"/>
<rect x="930.50" y="263.35" width="0.66" height="1.3" fill="#f92672" opacity="0.5"/>
<rect x="931.16" y="263.35" width="3.30" height="1.3" fill="#a6e22e" opacity="0.5"/>
<rect x="898.82" y="265.40" width="0.66" height="1.3" fill="#c965cc" opacity="0.5"/>
<rect x="899.48" y="265.40" width="18.48" height="1.3" fill="#f8f8f2" opacity="0.5"/>
<rect x="917.96" y="265.40" width="0.66" height="1.3" fill="#c965cc" opacity="0.5"/>
<rect x="918.62" y="265.40" width="0.66" height="1.3" fill="#f8f8f2" opacity="0.5"/>
<rect x="897.50" y="267.45" width="0.66" height="1.3" fill="#e8c100" opacity="0.5"/>
<rect x="898.16" y="267.45" width="0.66" height="1.3" fill="#4ea1d9" opacity="0.5"/>
<rect x="898.82" y="267.45" width="0.66" height="1.3" fill="#f8f8f2" opacity="0.5"/>
<rect x="897.50" y="271.55" width="7.92" height="1.3" fill="#f8f8f2" opacity="0.5"/>
<rect x="906.08" y="271.55" width="0.66" height="1.3" fill="#f92672" opacity="0.5"/>
<rect x="907.40" y="271.55" width="1.98" height="1.3" fill="#f92672" opacity="0.5"/>
<rect x="910.04" y="271.55" width="11.22" height="1.3" fill="#f8f8f2" opacity="0.5"/>
<rect x="921.26" y="271.55" width="0.66" height="1.3" fill="#4ea1d9" opacity="0.5"/>
<rect x="921.92" y="271.55" width="0.66" height="1.3" fill="#e8c100" opacity="0.5"/>
<rect x="898.82" y="273.60" width="4.62" height="1.3" fill="#d6c45a" opacity="0.5"/>
<rect x="904.10" y="273.60" width="7.92" height="1.3" fill="#f8f8f2" opacity="0.5"/>
<rect x="897.50" y="275.65" width="0.66" height="1.3" fill="#e8c100" opacity="0.5"/>
<rect x="898.16" y="275.65" width="0.66" height="1.3" fill="#4ea1d9" opacity="0.5"/>
<rect x="898.82" y="275.65" width="0.66" height="1.3" fill="#f92672" opacity="0.5"/>
<rect x="899.48" y="275.65" width="9.24" height="1.3" fill="#a6e22e" opacity="0.5"/>
<rect x="908.72" y="275.65" width="0.66" height="1.3" fill="#4ea1d9" opacity="0.5"/>
<rect x="909.38" y="275.65" width="4.62" height="1.3" fill="#f8f8f2" opacity="0.5"/>
<rect x="914.66" y="275.65" width="3.30" height="1.3" fill="#e6db74" opacity="0.5"/>
<rect x="917.96" y="275.65" width="4.62" height="1.3" fill="#e6db74" opacity="0.5"/>
<rect x="922.58" y="275.65" width="0.66" height="1.3" fill="#e6db74" opacity="0.5"/>
<rect x="923.24" y="275.65" width="0.66" height="1.3" fill="#4ea1d9" opacity="0.5"/>
<rect x="923.90" y="275.65" width="0.66" height="1.3" fill="#f92672" opacity="0.5"/>
<rect x="924.56" y="275.65" width="3.30" height="1.3" fill="#a6e22e" opacity="0.5"/>
<rect x="927.86" y="275.65" width="0.66" height="1.3" fill="#4ea1d9" opacity="0.5"/>
<rect x="928.52" y="275.65" width="18.48" height="1.3" fill="#f8f8f2" opacity="0.5"/>
<rect x="947.00" y="275.65" width="0.66" height="1.3" fill="#4ea1d9" opacity="0.5"/>
<rect x="897.50" y="277.70" width="0.66" height="1.3" fill="#f8f8f2" opacity="0.5"/>
<rect x="897.50" y="281.80" width="45.54" height="1.3" fill="#75715e" opacity="0.5"/>
<rect x="897.50" y="283.85" width="1.32" height="1.3" fill="#f92672" opacity="0.5"/>
<rect x="899.48" y="283.85" width="0.66" height="1.3" fill="#4ea1d9" opacity="0.5"/>
<rect x="900.14" y="283.85" width="7.92" height="1.3" fill="#f8f8f2" opacity="0.5"/>
<rect x="908.06" y="283.85" width="0.66" height="1.3" fill="#4ea1d9" opacity="0.5"/>
<rect x="909.38" y="283.85" width="0.66" height="1.3" fill="#4ea1d9" opacity="0.5"/>
<rect x="898.82" y="285.90" width="1.32" height="1.3" fill="#f92672" opacity="0.5"/>
<rect x="900.80" y="285.90" width="0.66" height="1.3" fill="#4ea1d9" opacity="0.5"/>
<rect x="901.46" y="285.90" width="3.96" height="1.3" fill="#f8f8f2" opacity="0.5"/>
<rect x="905.42" y="285.90" width="0.66" height="1.3" fill="#f92672" opacity="0.5"/>
<rect x="906.08" y="285.90" width="6.60" height="1.3" fill="#f8f8f2" opacity="0.5"/>
<rect x="913.34" y="285.90" width="0.66" height="1.3" fill="#f92672" opacity="0.5"/>
<rect x="914.66" y="285.90" width="2.64" height="1.3" fill="#ae81ff" opacity="0.5"/>
<rect x="917.30" y="285.90" width="1.98" height="1.3" fill="#4ea1d9" opacity="0.5"/>
<rect x="898.82" y="287.95" width="1.32" height="1.3" fill="#f92672" opacity="0.5"/>
<rect x="900.80" y="287.95" width="0.66" height="1.3" fill="#4ea1d9" opacity="0.5"/>
<rect x="901.46" y="287.95" width="3.96" height="1.3" fill="#f8f8f2" opacity="0.5"/>
<rect x="905.42" y="287.95" width="0.66" height="1.3" fill="#f92672" opacity="0.5"/>
<rect x="906.08" y="287.95" width="6.60" height="1.3" fill="#f8f8f2" opacity="0.5"/>
<rect x="913.34" y="287.95" width="0.66" height="1.3" fill="#f92672" opacity="0.5"/>
<rect x="914.66" y="287.95" width="2.64" height="1.3" fill="#ae81ff" opacity="0.5"/>
<rect x="917.30" y="287.95" width="1.98" height="1.3" fill="#4ea1d9" opacity="0.5"/>
<rect x="898.82" y="294.10" width="0.66" height="1.3" fill="#4ea1d9" opacity="0.5"/>
<rect x="900.14" y="296.15" width="3.96" height="1.3" fill="#f8f8f2" opacity="0.5"/>
<rect x="904.10" y="296.15" width="0.66" height="1.3" fill="#f92672" opacity="0.5"/>
<rect x="904.76" y="296.15" width="5.94" height="1.3" fill="#f8f8f2" opacity="0.5"/>
<rect x="910.70" y="296.15" width="0.66" height="1.3" fill="#f92672" opacity="0.5"/>
<rect x="911.36" y="296.15" width="1.98" height="1.3" fill="#a6e22e" opacity="0.5"/>
<rect x="913.34" y="296.15" width="9.24" height="1.3" fill="#e6db74" opacity="0.5"/>
<rect x="922.58" y="296.15" width="0.66" height="1.3" fill="#f8f8f2" opacity="0.5"/>
<rect x="897.50" y="298.20" width="1.32" height="1.3" fill="#75715e" opacity="0.5"/>
<rect x="899.48" y="298.20" width="17.82" height="1.3" fill="#75715e" opacity="0.5"/>
<rect x="898.82" y="302.30" width="0.66" height="1.3" fill="#4ea1d9" opacity="0.5"/>
<rect x="897.50" y="306.40" width="3.96" height="1.3" fill="#f92672" opacity="0.5"/>
<rect x="902.12" y="306.40" width="7.26" height="1.3" fill="#f8f8f2" opacity="0.5"/>
<rect x="910.04" y="306.40" width="2.64" height="1.3" fill="#f92672" opacity="0.5"/>
<rect x="913.34" y="306.40" width="8.58" height="1.3" fill="#e6db74" opacity="0.5"/>
<rect x="921.92" y="306.40" width="0.66" height="1.3" fill="#f8f8f2" opacity="0.5"/>
<rect x="897.50" y="308.45" width="1.32" height="1.3" fill="#75715e" opacity="0.5"/>
<rect x="899.48" y="308.45" width="17.82" height="1.3" fill="#75715e" opacity="0.5"/>
<rect x="898.82" y="310.50" width="3.30" height="1.3" fill="#66d9ef" opacity="0.5"/>
<rect x="902.78" y="310.50" width="4.62" height="1.3" fill="#f8f8f2" opacity="0.5"/>
<rect x="908.06" y="310.50" width="0.66" height="1.3" fill="#f92672" opacity="0.5"/>
<rect x="909.38" y="310.50" width="5.28" height="1.3" fill="#f8f8f2" opacity="0.5"/>
<rect x="914.66" y="310.50" width="0.66" height="1.3" fill="#f92672" opacity="0.5"/>
<rect x="915.32" y="310.50" width="10.56" height="1.3" fill="#a6e22e" opacity="0.5"/>
<rect x="925.88" y="310.50" width="9.24" height="1.3" fill="#e6db74" opacity="0.5"/>
<rect x="935.12" y="310.50" width="0.66" height="1.3" fill="#f8f8f2" opacity="0.5"/>
<rect x="898.82" y="312.55" width="0.66" height="1.3" fill="#4ea1d9" opacity="0.5"/>
<rect x="897.50" y="326.90" width="1.32" height="1.3" fill="#75715e" opacity="0.5"/>
<rect x="899.48" y="326.90" width="17.82" height="1.3" fill="#75715e" opacity="0.5"/>
</svg>
<div class="a" style="left:976px;top:264.7px;width:9px;height:137px;background:#3b3b3b"></div>
<div class="a" style="left:976px;top:166px;width:1px;height:373px;background:#141414"></div>
<svg class="a" style="left:0;top:0" width="1024" height="576">
<rect x="981.6" y="169" width="3.4" height="2.5" fill="#2f8f3a" opacity="0.85"/>
<rect x="981.6" y="171.5" width="3.4" height="4.5" fill="#e0431f" opacity="0.85"/>
<rect x="981.6" y="186" width="3.4" height="2" fill="#2f8f3a" opacity="0.85"/>
<rect x="981.6" y="188" width="3.4" height="5" fill="#e0431f" opacity="0.85"/>
<rect x="981.6" y="195" width="3.4" height="5" fill="#2f8f3a" opacity="0.85"/>
<rect x="981.6" y="200" width="3.4" height="4" fill="#e0431f" opacity="0.85"/>
<rect x="981.6" y="204" width="3.4" height="6" fill="#2f8f3a" opacity="0.85"/>
<rect x="981.6" y="210" width="3.4" height="3" fill="#2a3fb0" opacity="0.85"/>
<rect x="981.6" y="213" width="3.4" height="3" fill="#2f8f3a" opacity="0.85"/>
<rect x="981.6" y="216" width="3.4" height="4" fill="#2a3fb0" opacity="0.85"/>
<rect x="981.6" y="220" width="3.4" height="6" fill="#2f8f3a" opacity="0.85"/>
<rect x="981.6" y="226" width="3.4" height="6" fill="#e0431f" opacity="0.85"/>
<rect x="981.6" y="232" width="3.4" height="3" fill="#2f8f3a" opacity="0.85"/>
<rect x="981.6" y="240" width="3.4" height="5" fill="#2a3fb0" opacity="0.85"/>
<rect x="981.6" y="245" width="3.4" height="5" fill="#e0431f" opacity="0.85"/>
<rect x="981.6" y="262" width="3.4" height="4" fill="#e0431f" opacity="0.85"/>
<rect x="981.6" y="283" width="3.4" height="3" fill="#2a3fb0" opacity="0.85"/>
<rect x="981.6" y="296" width="3.4" height="3" fill="#e0431f" opacity="0.85"/>
<rect x="981.6" y="303" width="3.4" height="3" fill="#e0431f" opacity="0.85"/>
<rect x="981.6" y="310.5" width="3.4" height="2.0" fill="#2a3fb0" opacity="0.85"/>
<rect x="981.6" y="317" width="3.4" height="3" fill="#2f8f3a" opacity="0.85"/>
<rect x="981.6" y="328" width="3.4" height="4" fill="#e0431f" opacity="0.85"/>
<rect x="981.6" y="338" width="3.4" height="4" fill="#e0431f" opacity="0.85"/>
<rect x="981.6" y="344" width="3.4" height="3" fill="#e0431f" opacity="0.85"/>
<rect x="981.6" y="350" width="3.4" height="1.5" fill="#2a3fb0" opacity="0.85"/>
<rect x="981.6" y="364" width="3.4" height="2" fill="#2f8f3a" opacity="0.85"/>
<rect x="981.6" y="367" width="3.4" height="8" fill="#e0431f" opacity="0.85"/>
<rect x="981.6" y="395" width="3.4" height="3" fill="#e0431f" opacity="0.85"/>
<rect x="981.6" y="416" width="3.4" height="3" fill="#2a3fb0" opacity="0.85"/>
<rect x="981.6" y="422" width="3.4" height="4" fill="#2f8f3a" opacity="0.85"/>
<rect x="981.6" y="430" width="3.4" height="2" fill="#2f8f3a" opacity="0.85"/>
<rect x="981.6" y="432" width="3.4" height="8" fill="#e0431f" opacity="0.85"/>
<rect x="981.6" y="447" width="3.4" height="3" fill="#e0431f" opacity="0.85"/>
<rect x="981.6" y="463" width="3.4" height="4" fill="#e0431f" opacity="0.85"/>
<rect x="981.6" y="475" width="3.4" height="3" fill="#e0431f" opacity="0.85"/>
<rect x="981.6" y="484" width="3.4" height="3" fill="#e0431f" opacity="0.85"/>
<rect x="981.6" y="516" width="3.4" height="4" fill="#e0431f" opacity="0.85"/>
<rect x="981.6" y="536" width="3.4" height="3" fill="#e0431f" opacity="0.85"/>
</svg>
<div class="a" style="left:34px;top:538.9px;width:956px;height:5.7px;background:#fff"></div>
<div class="a" style="left:985px;top:166px;width:0.01px;height:1px"></div>
</body></html>
